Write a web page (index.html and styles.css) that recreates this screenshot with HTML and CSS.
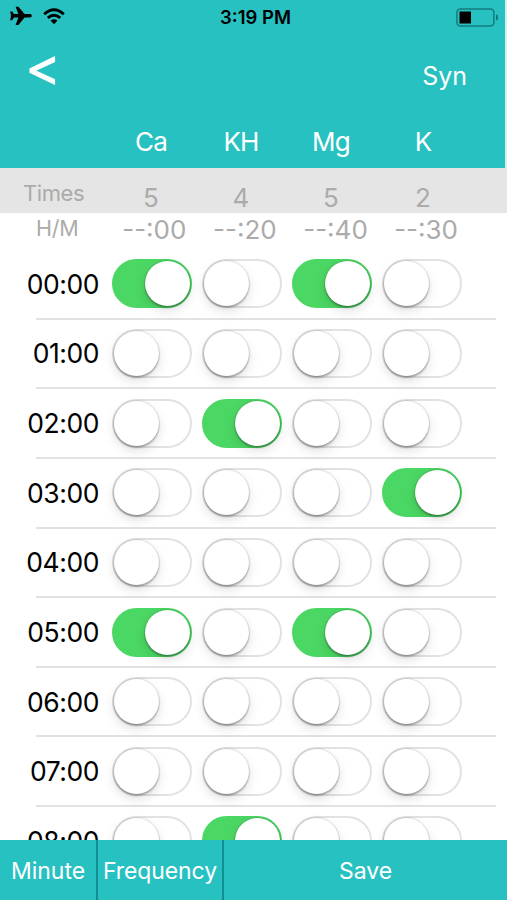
FILE: index.html
```html
<!DOCTYPE html>
<html lang="en">
<head>
<meta charset="utf-8">
<title>Dosing schedule</title>
<link rel="stylesheet" href="styles.css">
</head>
<body>
<div class="app">
  <header class="header">
    <div class="status">
      <svg class="plane" width="22" height="20" viewBox="0 0 22 20"><path d="M21.8 9.8c0-1.100-.9-1.700-2.200-1.700h-5L8.400.7H5.600l2.800 7.400H4L2.200 5.400H.2l.8 4.400-.8 4.400h2L4 11.500h4.400l-2.800 7.400h2.800l6.200-7.400h5c1.300 0 2.200-.6 2.200-1.700z"/></svg>
      <svg class="wifi" width="22" height="17" viewBox="0 0 22 17"><path d="M1.200 6.200Q11-2.800 20.800 6.200M4.800 9.900Q11 4.500 17.200 9.900" fill="none" stroke="#000" stroke-width="2.900"/><path d="M7.500 12.500Q11 9.800 14.500 12.500L11 16.200z"/></svg>
      <span class="clock">3:19 PM</span>
      <svg class="battery" width="43" height="19" viewBox="0 0 43 19"><rect x=".9" y=".9" width="37" height="17" rx="3.500" fill="none" stroke="#137b7e" stroke-width="1.500"/><rect x="3.500" y="3.500" width="11.500" height="12"/><path d="M40 6.200c1.500.3 2.200 1.500 2.200 3.200s-.7 2.900-2.200 3.200z" fill="#137b7e"/></svg>
    </div>
    <div class="nav">
      <span class="back">&lt;</span>
      <span class="sync">Syn</span>
    </div>
    <div class="columns names"><span>Ca</span><span>KH</span><span>Mg</span><span>K</span></div>
  </header>
  <section class="times"><span class="label">Times</span><div class="columns counts"><span>5</span><span>4</span><span>5</span><span>2</span></div></section>
  <section class="offsets"><span class="label">H/M</span><div class="minutes"><span>--:00</span><span>--:20</span><span>--:40</span><span>--:30</span></div></section>
  <main class="schedule">
    <div class="row"><span class="hour">00:00</span><i class="switch on"></i><i class="switch"></i><i class="switch on"></i><i class="switch"></i></div>
    <div class="row"><span class="hour">01:00</span><i class="switch"></i><i class="switch"></i><i class="switch"></i><i class="switch"></i></div>
    <div class="row"><span class="hour">02:00</span><i class="switch"></i><i class="switch on"></i><i class="switch"></i><i class="switch"></i></div>
    <div class="row"><span class="hour">03:00</span><i class="switch"></i><i class="switch"></i><i class="switch"></i><i class="switch on"></i></div>
    <div class="row"><span class="hour">04:00</span><i class="switch"></i><i class="switch"></i><i class="switch"></i><i class="switch"></i></div>
    <div class="row"><span class="hour">05:00</span><i class="switch on"></i><i class="switch"></i><i class="switch on"></i><i class="switch"></i></div>
    <div class="row"><span class="hour">06:00</span><i class="switch"></i><i class="switch"></i><i class="switch"></i><i class="switch"></i></div>
    <div class="row"><span class="hour">07:00</span><i class="switch"></i><i class="switch"></i><i class="switch"></i><i class="switch"></i></div>
    <div class="row"><span class="hour">08:00</span><i class="switch"></i><i class="switch on"></i><i class="switch"></i><i class="switch"></i></div>
  </main>
  <footer class="footer"><span class="minute">Minute</span><span class="frequency">Frequency</span><span class="save">Save</span></footer>
</div>
</body>
</html>
```
FILE: styles.css
```css
* { box-sizing: border-box; }
body { margin: 0; background: #fff; font-family: Inter, "Liberation Sans", sans-serif; }
.app { width: 507px; height: 900px; display: flex; flex-direction: column; overflow: hidden; }
.header { width: 505px; height: 168px; background: #28c1c1; color: #fff; flex: none; box-shadow: 2px 0 #d4f2f2; }
.status { height: 35px; display: flex; align-items: flex-start; }
.plane { margin: 6px 0 0 10px; }
.wifi { margin: 8px 0 0 11px; }
.clock { width: 76px; margin: 6px 0 0 154px; padding-left: 1px; color: #000; font-size: 18.5px; line-height: 23px; font-weight: 600; white-space: nowrap; }
.battery { margin: 8px 0 0 161px; }
.nav { height: 80px; display: flex; justify-content: space-between; padding: 0 38px 0 25px; }
.back { font-size: 54px; line-height: 63px; font-weight: 500; }
.sync { margin-top: 23px; font-size: 25px; line-height: 36px; }
.columns { display: grid; grid-template-columns: 90px 90px 90px 94px; margin-left: 106px; text-align: center; }
.names { font-size: 26px; line-height: 53px; letter-spacing: -.8px; }
.times { height: 45px; flex: none; background: #e5e5e5; color: #ababab; display: flex; }
.label { flex: none; }
.times .label { width: 106px; padding-left: 23px; font-size: 22px; line-height: 51px; letter-spacing: -.4px; }
.counts { margin-left: 0; font-size: 26px; line-height: 59px; }
.offsets { height: 37px; flex: none; display: flex; color: #ababab; }
.offsets .label { width: 109px; padding-left: 36px; font-size: 21.5px; line-height: 31px; letter-spacing: -.3px; }
.minutes { display: grid; grid-template-columns: repeat(4, 90.6px); text-align: center; font-size: 26px; line-height: 33px; }
.schedule { flex: 1; min-height: 0; overflow: hidden; }
.row { height: 69.65px; display: flex; align-items: center; gap: 10px; background: linear-gradient(#e2e2e2, #e2e2e2) 36px 100% / 460px 2px no-repeat; }
.hour { width: 102px; padding-right: 3px; margin-top: -2px; text-align: right; font-size: 26.5px; line-height: 32px; letter-spacing: -.45px; white-space: nowrap; }
.switch { width: 80px; height: 49px; border-radius: 25px; border: 2px solid #e2e2e2; flex: none; display: flex; align-items: center; margin-top: -2px; }
.switch::before { content: ""; width: 45px; height: 45px; border-radius: 50%; background: #fff; box-shadow: 0 0 1px 1px rgba(0,0,0,.1), 0 2px 2px rgba(0,0,0,.25), 0 5px 12px rgba(0,0,0,.12); }
.switch.on { background: #4bd763; border-color: #4bd763; justify-content: flex-end; }
.footer { height: 60px; flex: none; display: flex; background: #28c1c1; color: #fff; font-size: 23px; line-height: 62px; text-align: center; white-space: nowrap; }
.minute { width: 98px; border-right: 2px solid #128f92; }
.frequency { width: 126px; border-right: 2px solid #128f92; letter-spacing: -.1px; }
.save { flex: 1; }
```
